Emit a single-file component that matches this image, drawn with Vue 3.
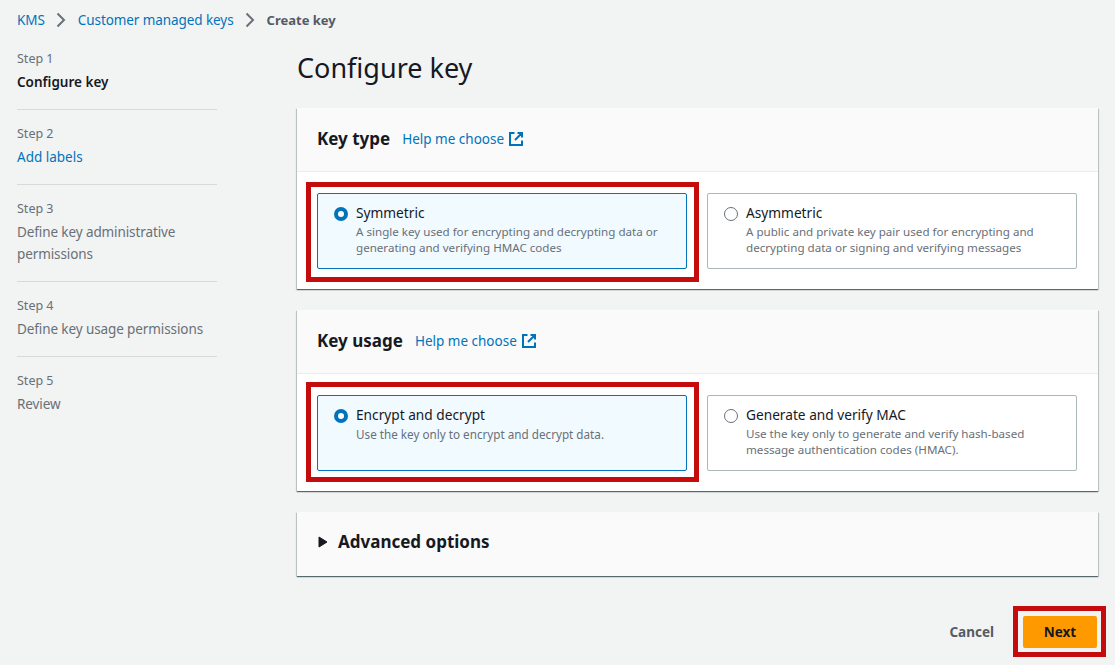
<script setup>
const steps = [
  { n: 'Step 1', label: 'Configure key', kind: 'active' },
  { n: 'Step 2', label: 'Add labels', kind: 'link' },
  { n: 'Step 3', label: 'Define key administrative permissions', kind: 'off' },
  { n: 'Step 4', label: 'Define key usage permissions', kind: 'off' },
  { n: 'Step 5', label: 'Review', kind: 'off' }
]
const sections = [
  {
    title: 'Key type',
    mark: 'mark-a',
    options: [
      { t: 'Symmetric', d: 'A single key used for encrypting and decrypting data or generating and verifying HMAC codes', on: true },
      { t: 'Asymmetric', d: 'A public and private key pair used for encrypting and decrypting data or signing and verifying messages', on: false }
    ]
  },
  {
    title: 'Key usage',
    mark: 'mark-b',
    options: [
      { t: 'Encrypt and decrypt', d: 'Use the key only to encrypt and decrypt data.', on: true },
      { t: 'Generate and verify MAC', d: 'Use the key only to generate and verify hash-based message authentication codes (HMAC).', on: false }
    ]
  }
]
</script>

<template>
  <div class="page">
    <nav class="crumbs">
      <a class="link">KMS</a>
      <svg class="chev" width="10" height="16" viewBox="0 0 10 16"><path d="M1.5 1.5 8 8 1.5 14.5" /></svg>
      <a class="link">Customer managed keys</a>
      <svg class="chev" width="10" height="16" viewBox="0 0 10 16"><path d="M1.5 1.5 8 8 1.5 14.5" /></svg>
      <span class="current">Create key</span>
    </nav>
    <div class="body">
      <aside class="side">
        <div v-for="s in steps" :key="s.n" class="step">
          <div class="num">{{ s.n }}</div>
          <div class="lab" :class="s.kind">{{ s.label }}</div>
        </div>
      </aside>
      <main class="main">
        <h1>Configure key</h1>
        <section v-for="sec in sections" :key="sec.title" class="card" :class="sec.mark">
          <header class="head">
            <h2>{{ sec.title }}</h2>
            <a class="link help">Help me choose</a>
            <svg width="16" height="16" viewBox="0 0 16 16" class="ext"><path d="M6.5 2H2V14H14V9.5M9.5 2H14V6.5M14 2 7 9" /></svg>
          </header>
          <div class="opts">
            <div v-for="o in sec.options" :key="o.t" class="opt" :class="{ on: o.on }">
              <span class="radio"></span>
              <div class="txt">
                <div class="ot">{{ o.t }}</div>
                <div class="od">{{ o.d }}</div>
              </div>
            </div>
          </div>
        </section>
        <section class="card adv">
          <svg width="10" height="12" viewBox="0 0 10 12"><path d="M1 1 9 6 1 11Z" fill="#16191f" stroke="#16191f" /></svg>
          <h2>Advanced options</h2>
        </section>
        <footer class="foot">
          <span class="cancel">Cancel</span>
          <button class="next">Next</button>
        </footer>
      </main>
    </div>
  </div>
</template>

<style>
html, body { margin: 0; background: #f2f3f3; }
</style>

<style scoped>
.page {
  width: 1115px;
  height: 665px;
  overflow: hidden;
  box-sizing: border-box;
  background: #f2f3f3;
  font-family: "Noto Sans", "Open Sans", sans-serif;
  color: #16191f;
  font-size: 14px;
}
.link { color: #0073bb; }
.crumbs {
  height: 40px;
  padding-left: 17px;
  display: flex;
  align-items: center;
  font-size: 13.5px;
  letter-spacing: -0.08px;
}
.chev { margin: 0 12px 0 11px; fill: none; stroke: #687078; stroke-width: 2; }
.current { color: #545b64; font-weight: 700; font-size: 13px; letter-spacing: 0; }
.body { display: flex; }
.side { width: 200px; margin-left: 17px; padding-top: 8px; flex: none; }
.step {
  padding-bottom: 16px;
  margin-bottom: 13px;
  border-bottom: 1px solid #d5dbdb;
}
.step:last-child { border-bottom: 0; }
.num { font-size: 12.5px; line-height: 22px; color: #687078; }
.lab { font-size: 13.5px; letter-spacing: -0.1px; line-height: 22px; margin-top: 1px; color: #687078; }
.lab.active { color: #16191f; font-weight: 600; letter-spacing: 0; }
.lab.link { color: #0073bb; letter-spacing: 0; }
.main { width: 801px; margin-left: 80px; flex: none; }
h1 {
  margin: 0;
  font-size: 27px;
  font-weight: 400;
  line-height: 36px;
  padding-top: 10px;
  height: 68px;
  box-sizing: border-box;
  color: #16191f;
}
.card {
  background: #fff;
  box-shadow: 0 1px 1px 0 rgba(0, 28, 36, 0.5), 1px 1px 1px 0 rgba(0, 28, 36, 0.15), -1px 1px 1px 0 rgba(0, 28, 36, 0.15);
  margin-bottom: 21px;
}
.head {
  background: #fafafa;
  border-bottom: 1px solid #eaeded;
  padding: 0 20px 2px;
  height: 61px;
  display: flex;
  align-items: center;
}
h2 { margin: 0; font-size: 17px; font-weight: 700; line-height: 22px; color: #16191f; }
.help { margin-left: 12px; font-size: 13.5px; }
.ext { margin-left: 4px; fill: none; stroke: #0073bb; stroke-width: 2; }
.opts {
  display: grid;
  grid-template-columns: 370px 370px;
  gap: 20px;
  padding: 21px 20px 20px;
}
.opt {
  position: relative;
  height: 76px;
  box-sizing: border-box;
  border: 1px solid #aab7b8;
  border-radius: 2px;
  padding: 8px 16px 0 16px;
  display: flex;
  gap: 8px;
  background: #fff;
}
.opt.on { background: #f1faff; border-color: #0073bb; }
.opt.on::after {
  content: "";
  position: absolute;
  border: 5px solid #c40c0c;
  pointer-events: none;
}
.mark-a .opt.on::after { inset: -12px -13px -14px -12px; }
.mark-b .opt.on::after { inset: -14px -13px -12px -12px; }
.radio {
  flex: none;
  width: 14px;
  height: 14px;
  box-sizing: border-box;
  border: 1px solid #687078;
  border-radius: 50%;
  background: #fff;
  margin-top: 5px;
}
.opt.on .radio { border: 4px solid #0073bb; }
.ot { font-size: 13.7px; line-height: 21px; color: #16191f; }
.od { font-size: 11.6px; line-height: 16px; color: #687078; margin-top: 1px; }
.mark-b .opt.on .od { font-size: 11.7px; }
.adv {
  height: 64px;
  background: #fafafa;
  display: flex;
  align-items: center;
  padding-left: 21px;
  padding-bottom: 4px;
  box-sizing: border-box;
  gap: 10px;
  margin-bottom: 0;
}
.foot {
  margin-top: 40px;
  display: flex;
  justify-content: flex-end;
  align-items: center;
  padding-right: 1px;
}
.cancel { font-weight: 700; font-size: 13.5px; color: #545b64; margin-right: 29px; }
.next {
  position: relative;
  width: 74px;
  height: 32px;
  border: 0;
  border-radius: 2px;
  background: #ff9900;
  color: #16191f;
  font: 700 13.5px "Noto Sans", "Open Sans", sans-serif;
}
.next::after {
  content: "";
  position: absolute;
  inset: -10px -9px -9px -10px;
  border: 5px solid #c40c0c;
  pointer-events: none;
}
</style>
